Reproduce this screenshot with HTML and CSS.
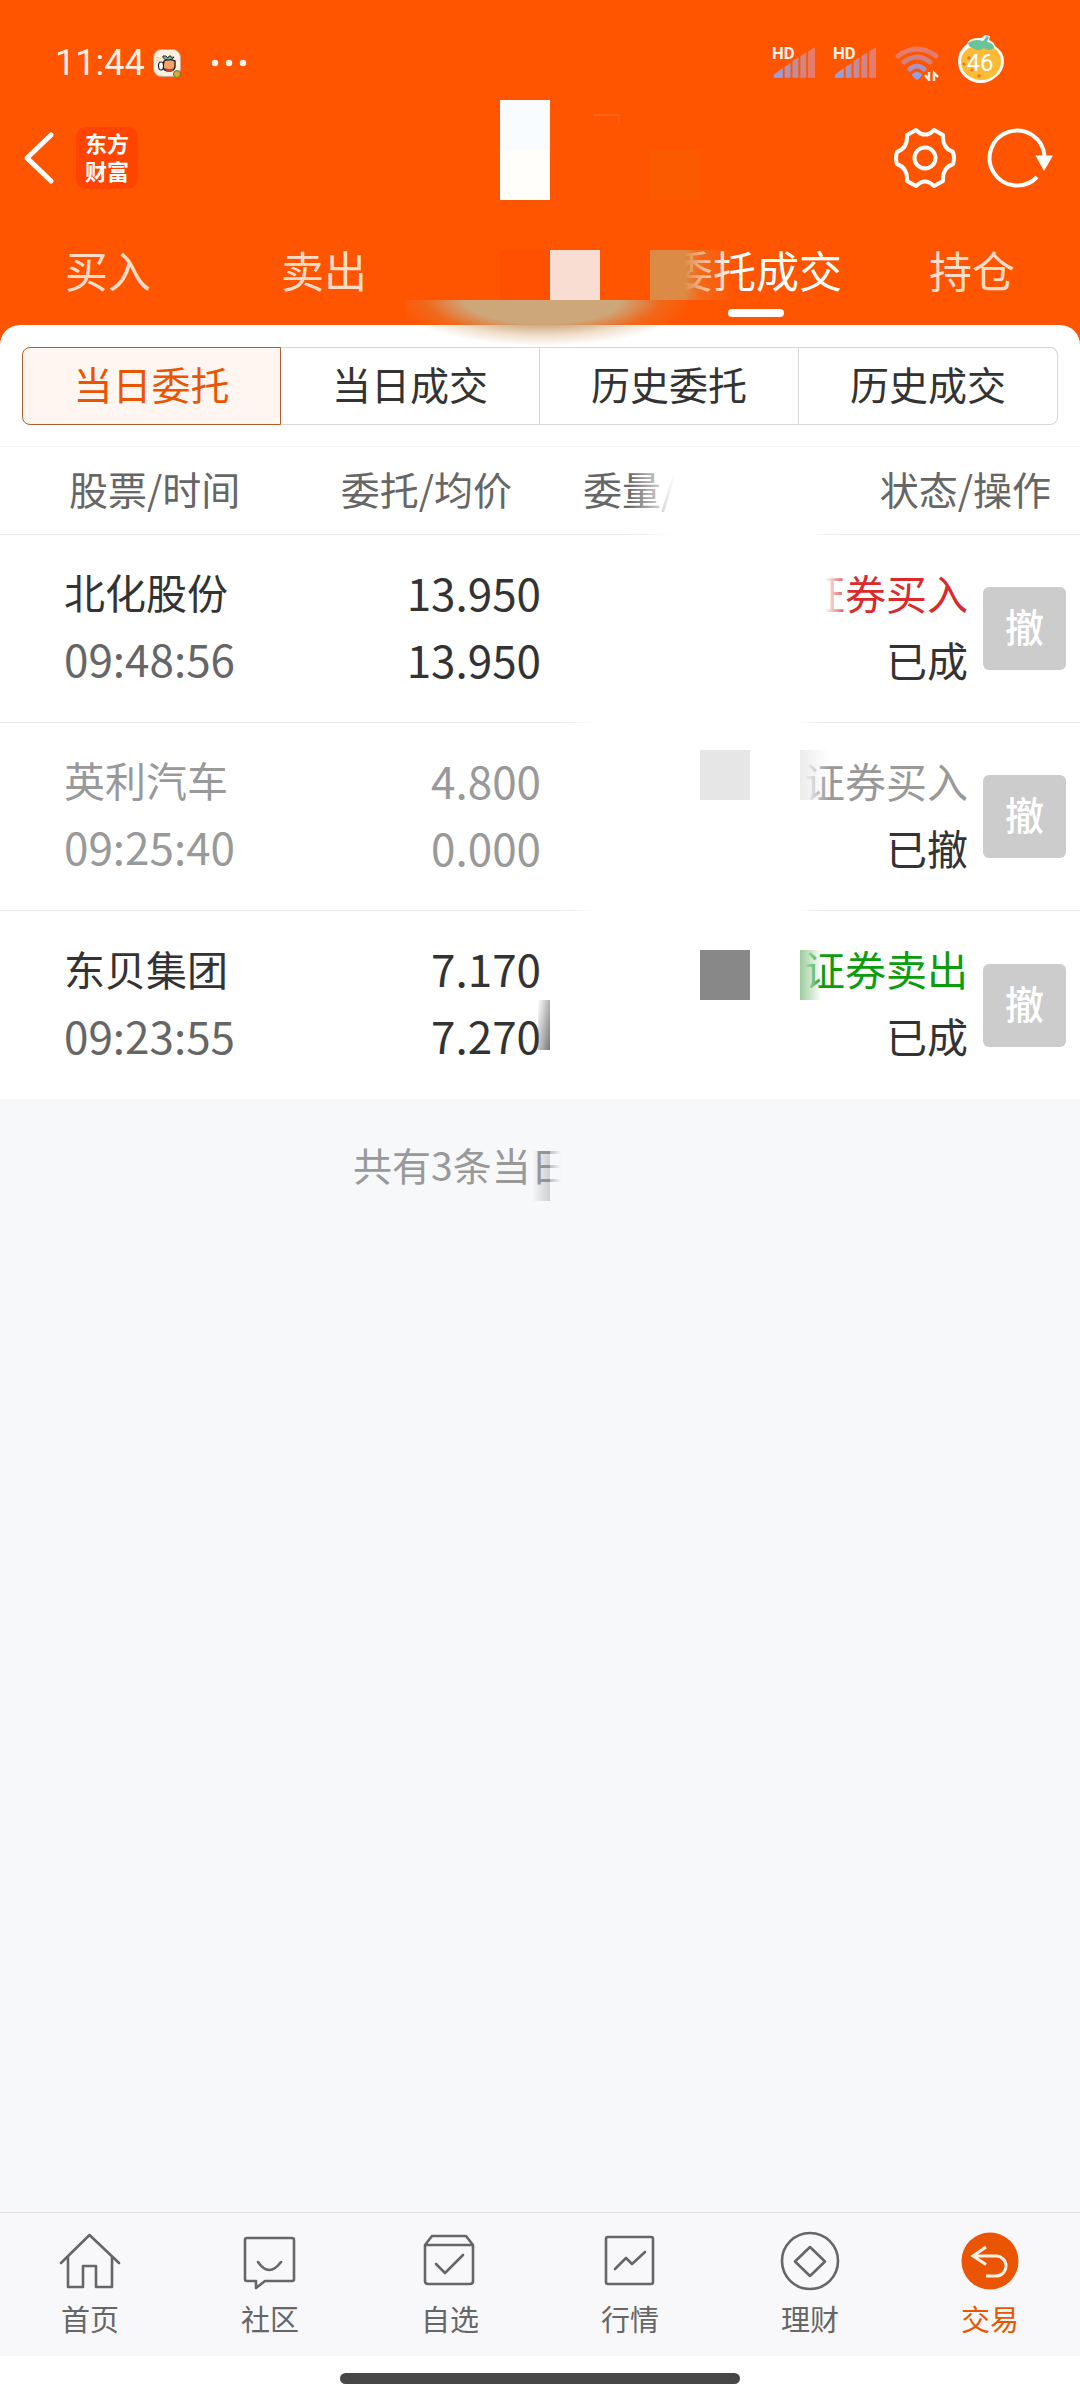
FILE: index.html
```html
<!DOCTYPE html>
<html lang="zh-CN">
<head>
    <meta charset="UTF-8">
    <meta name="viewport" content="width=device-width, initial-scale=1.0">
    <title>委托成交</title>
    <link rel="stylesheet" href="styles.css">
</head>
<body>
    <header class="header">
        <!-- Status bar -->
        <div class="status-bar">
            <span class="clock">11:44</span>
            <svg class="app-badge" viewBox="0 0 28 28">
                <rect x="0.5" y="0.5" width="27" height="27" rx="8" fill="#fdf0e0" stroke="#d9a48c"/>
                <path d="M3 9c2-2 3 2 5 0M3 12c2-1 2 1 4 0" fill="none" stroke="#eebb99"/>
                <path d="M11 12q5-3 11 0v6q-1 4-6 4t-6-4z" fill="#f6a36a" stroke="#222" stroke-width="1.4"/>
                <path d="M12 19q5 2 9 0-1 4-4.500 4t-4.500-4z" fill="#b8433a"/>
                <path d="M15 11q-6-1-5-4 3-1 5 2 1-3 3-2-1 2 3 1-1 3-6 3z" fill="#7db8a2" stroke="#222"/>
                <ellipse cx="8" cy="17" rx="2.5" ry="4" fill="#fff" stroke="#222" stroke-width="1.2"/>
                <circle cx="24" cy="25" r="3.5" fill="#e0a92e" stroke="#457a50"/>
            </svg>
            <svg class="more-dots" viewBox="0 0 36 8">
                <g fill="#fff3ea"><circle cx="4" cy="4" r="3.2"/><circle cx="18" cy="4" r="3.2"/><circle cx="32" cy="4" r="3.2"/></g>
            </svg>
            <div class="status-right">
                <svg class="signal" viewBox="0 0 44 32">
                    <defs>
                        <linearGradient id="sig" x1="0" x2="44" y1="0" y2="0" gradientUnits="userSpaceOnUse">
                            <stop offset="0" stop-color="#88a6f2"/><stop offset="0.5" stop-color="#c08c9c"/><stop offset="1" stop-color="#ee7961"/>
                        </linearGradient>
                    </defs>
                    <g fill="url(#sig)">
                        <path d="M1 31v-3l9-7v10z"/><path d="M12 31V20l6-4v15z"/><path d="M20 31V14l6-4v21z"/><path d="M28 31V9l6-4v26z"/><path d="M36 31V4l7-4v31z"/>
                    </g>
                    <text class="hd" x="-1" y="12">HD</text>
                </svg>
                <svg class="signal" viewBox="0 0 44 32">
                    <g fill="url(#sig)">
                        <path d="M1 31v-3l9-7v10z"/><path d="M12 31V20l6-4v15z"/><path d="M20 31V14l6-4v21z"/><path d="M28 31V9l6-4v26z"/><path d="M36 31V4l7-4v31z"/>
                    </g>
                    <text class="hd" x="-1" y="12">HD</text>
                </svg>
                <svg class="wifi" viewBox="0 0 44 36">
                    <g fill="none" stroke-width="5" stroke-linecap="round">
                        <path d="M3 11q19-14 38 0" stroke="#e47b6c"/>
                        <path d="M9 17q13-10 26 0" stroke="#cf8184"/>
                        <path d="M15 24q7-6 14 0" stroke="#ab92bf"/>
                    </g>
                    <path d="M17 29q5-4 10 0 0 3-5 6-5-3-5-6z" fill="#8da3ec"/>
                    <path d="M34 27v8l-4-5M39 36v-8l4 4" fill="none" stroke="#fff3ea" stroke-width="2.4"/>
                </svg>
                <svg class="battery" viewBox="0 0 48 50">
                    <path d="M10 10q2-7 14-6l4-3 5 1-1 4q5 2 6 6 9 6 9 15 0 10-8 16-7 6-15 6-9 0-16-6Q1 37 1 27q0-10 9-17z" fill="#fff"/>
                    <path d="M12 14h25q7 5 7 13 0 8-6 14-6 5-14 5-7 0-14-5-6-5-6-14 0-8 8-13z" fill="#fcbb37"/>
                    <path d="M11 9q6-5 15-2l4-5 2 1-2 5q7 1 7 6-5 4-10 0-7 4-11 0-4 0-5-5z" fill="#68c29a"/>
                    <g fill="#e97b16"><circle cx="12" cy="24" r="1.8"/><circle cx="7" cy="30" r="1.6"/><circle cx="15" cy="36" r="1.6"/><circle cx="22" cy="42" r="1.8"/></g>
                    <text class="level" x="23" y="37" text-anchor="middle">46</text>
                </svg>
            </div>
        </div>

        <!-- Title bar -->
        <div class="title-bar">
            <button class="icon-btn back" aria-label="返回">
                <svg viewBox="0 0 32 54"><path d="M28 4 4 27l24 23" fill="none" stroke="#fff" stroke-width="5" stroke-linecap="round" stroke-linejoin="round"/></svg>
            </button>
            <span class="logo"><span>东方</span><span>财富</span></span>
            <button class="icon-btn settings" aria-label="设置">
                <svg viewBox="-32 -32 64 64" fill="none" stroke="#fff" stroke-width="4" stroke-linejoin="round">
                    <path d="M-9-28Q0-19 9-28L18-23Q17-10 28-6 30 0 28 6 17 10 18 23L9 28Q0 19-9 28L-18 23Q-17 10-28 6-30 0-28-6-17-10-18-23Z"/>
                    <circle r="10.5"/>
                </svg>
            </button>
            <button class="icon-btn refresh" aria-label="刷新">
                <svg viewBox="-32 -32 72 64">
                    <path d="M20 19A27.5 27.5 0 1 1 27.5-2" fill="none" stroke="#fff" stroke-width="4"/>
                    <path d="M18.500-2.500H36L27 13z" fill="#fff"/>
                </svg>
            </button>
        </div>

        <nav class="tabs">
            <a href="#" class="tab">买入</a>
            <a href="#" class="tab">卖出</a>
            <a href="#" class="tab" aria-label="撤单"></a>
            <a href="#" class="tab active">委托成交</a>
            <a href="#" class="tab">持仓</a>
        </nav>

        <!-- Covered patches -->
        <span class="patch patch-title"></span>
        <span class="patch patch-corner"></span>
        <span class="patch patch-dim"></span>
        <span class="patch patch-red"></span>
        <span class="patch patch-pink"></span>
        <span class="patch patch-tan"></span>
        <span class="patch patch-glow"></span>
    </header>

    <main class="content">
        <section class="card">
            <div class="segments">
                <button class="segment active">当日委托</button>
                <button class="segment">当日成交</button>
                <button class="segment">历史委托</button>
                <button class="segment">历史成交</button>
            </div>

            <div class="orders">
                <table class="order-table">
                    <colgroup>
                        <col class="col-name">
                        <col class="col-price">
                        <col class="col-amount">
                        <col class="col-state">
                        <col class="col-action">
                    </colgroup>
                    <thead>
                        <tr>
                            <th class="name">股票/时间</th>
                            <th class="price">委托/均价</th>
                            <th class="amount">委量/</th>
                            <th class="state" colspan="2">状态/操作</th>
                        </tr>
                    </thead>
                    <tbody>
                        <tr>
                            <td class="name">北化股份<br><span class="num time">09:48:56</span></td>
                            <td class="price num">13.950<br>13.950</td>
                            <td></td>
                            <td class="state"><span class="buy">证券买入</span><br>已成</td>
                            <td class="action"><button class="cancel-btn">撤</button></td>
                        </tr>
                        <tr class="cancelled">
                            <td class="name">英利汽车<br><span class="num time">09:25:40</span></td>
                            <td class="price num">4.800<br>0.000</td>
                            <td></td>
                            <td class="state"><span class="void">证券买入</span><br>已撤</td>
                            <td class="action"><button class="cancel-btn">撤</button></td>
                        </tr>
                        <tr>
                            <td class="name">东贝集团<br><span class="num time">09:23:55</span></td>
                            <td class="price num">7.170<br>7.270</td>
                            <td></td>
                            <td class="state"><span class="sell">证券卖出</span><br>已成</td>
                            <td class="action"><button class="cancel-btn">撤</button></td>
                        </tr>
                    </tbody>
                </table>
                <span class="patch veil-head"></span>
                <span class="patch veil-body"></span>
                <span class="patch veil-state"></span>
                <span class="patch patch-light"></span>
                <span class="patch patch-light-edge"></span>
                <span class="patch patch-dark"></span>
                <span class="patch patch-green-edge"></span>
                <span class="patch patch-shadow"></span>
            </div>
        </section>
        <p class="summary">共有3条当日<span class="patch summary-fade"></span><span class="patch summary-shadow"></span></p>
    </main>

    <nav class="bottom-nav">
        <a href="#" class="nav-item">
            <svg viewBox="0 0 64 64"><path d="M3 33 31.500 5 61 33M10 27v30h15V36h13v21h16V27"/></svg>
            首页
        </a>
        <a href="#" class="nav-item">
            <svg viewBox="0 0 64 64"><path d="M9 8h45q2 0 2 2v39q0 2-2 2H27l-9 7v-7H9q-2 0-2-2V10q0-2 2-2zM20 32q11 16 23 0"/></svg>
            社区
        </a>
        <a href="#" class="nav-item">
            <svg viewBox="0 0 64 64"><path d="M7 15h48v36q0 3-3 3H10q-3 0-3-3zL14 6h34l7 9M18 34l9 9 18-18"/></svg>
            自选
        </a>
        <a href="#" class="nav-item">
            <svg viewBox="0 0 64 64"><rect x="8" y="7" width="47" height="47" rx="2"/><path d="m17 39 11-11 6 6 13-12"/></svg>
            行情
        </a>
        <a href="#" class="nav-item">
            <svg viewBox="0 0 64 64"><circle cx="32" cy="31" r="28"/><path d="m32 17 15 14.500L32 46 17 31.500z"/></svg>
            理财
        </a>
        <a href="#" class="nav-item active">
            <svg viewBox="0 0 64 64"><circle class="disc" cx="32" cy="31" r="28.500"/><path class="arrow" d="M28 17 15 26l13 8.500M15 26h23a10 10 0 0 1 0 20H28"/></svg>
            交易
        </a>
    </nav>
    <div class="home-indicator"></div>
</body>
</html>
```
FILE: styles.css
```css
:root {
    --orange: #ff5500;
    --accent: #ea5504;
    --text: #333;
    --muted: #666;
    --faint: #999;
    --page: #f7f8fa;
}

* {
    margin: 0;
    padding: 0;
    box-sizing: border-box;
}

body {
    font-family: 'Noto Sans CJK SC', sans-serif;
    color: var(--text);
    background: var(--page);
    min-height: 100vh;
    display: flex;
    flex-direction: column;
}

a {
    color: inherit;
    text-decoration: none;
}

button {
    font: inherit;
    color: inherit;
    background: none;
    border: 0;
}

svg {
    display: block;
}

/* Header */
.header {
    position: relative;
    background: var(--orange);
    padding-bottom: 20px;
}

.status-bar {
    display: flex;
    align-items: center;
    height: 96px;
    padding: 30px 75px 0 55px;
}

.clock {
    font-family: Roboto, sans-serif;
    font-size: 36px;
    line-height: 66px;
    color: #ffeee2;
    margin-right: 8px;
}

.app-badge {
    width: 28px;
    height: 28px;
}

.more-dots {
    width: 36px;
    height: 8px;
    margin-left: 30px;
}

.status-right {
    display: flex;
    align-items: center;
    gap: 18px;
    margin-left: auto;
}

.signal {
    width: 43px;
    height: 32px;
    overflow: visible;
}

.wifi {
    width: 44px;
    height: 36px;
}

.battery {
    width: 48px;
    height: 50px;
    margin-bottom: 8px;
}

.hd {
    font: 700 17px Roboto, sans-serif;
    fill: #fff3ea;
}

.level {
    font: 400 24px Roboto, sans-serif;
    fill: #fff;
}

.title-bar {
    display: flex;
    align-items: center;
    height: 124px;
    padding: 0 23px;
}

.back svg {
    width: 32px;
    height: 54px;
}

.logo {
    display: flex;
    flex-direction: column;
    width: 62px;
    height: 62px;
    margin-left: 21px;
    padding-top: 1px;
    border-radius: 10px;
    background: #ff4400;
    color: #fff;
    font-size: 22px;
    font-weight: 700;
    line-height: 28px;
    text-align: center;
}

.settings {
    margin-left: auto;
}

.settings svg {
    width: 64px;
    height: 64px;
}

.refresh {
    margin-left: 28px;
}

.refresh svg {
    width: 72px;
    height: 64px;
}

.tabs {
    display: grid;
    grid-template-columns: repeat(5, 1fr);
    height: 105px;
    padding-top: 19px;
}

.tab {
    display: flex;
    flex-direction: column;
    align-items: center;
    font-size: 43px;
    line-height: 60px;
    color: #ffdcc8;
    white-space: nowrap;
}

.tab.active {
    color: #fff;
}

.tab.active::after {
    content: '';
    width: 56px;
    height: 8px;
    margin-top: 10px;
    border-radius: 4px;
    background: #fff;
}

/* Patches lying over the content */
.patch {
    position: absolute;
    width: 50px;
    height: 50px;
    pointer-events: none;
}

.patch-title {
    left: 500px;
    top: 100px;
    height: 100px;
    background: linear-gradient(#f8fcff 50%, #fffefa 50%);
}

.patch-corner {
    left: 593px;
    top: 114px;
    width: 27px;
    height: 10px;
    border-top: 2px solid #ff6418;
    border-right: 2px solid #ff5f10;
}

.patch-dim {
    left: 650px;
    top: 150px;
    background: #fb5a00;
}

.patch-red {
    left: 500px;
    top: 250px;
    background: #ff5000;
}

.patch-pink {
    left: 550px;
    top: 250px;
    background: #f9ddd3;
}

.patch-tan {
    left: 650px;
    top: 250px;
    width: 85px;
    background: linear-gradient(90deg, #db8b45 40%, rgba(233, 120, 45, 0.6) 58%, rgba(255, 85, 0, 0));
}

.patch-glow {
    z-index: 2;
    left: 405px;
    top: 300px;
    width: 300px;
    background: radial-gradient(ellipse 150px 46px at 46% 0, #cda67a 52%, rgba(205, 150, 90, 0.3) 78%, rgba(205, 150, 90, 0));
}

/* Card */
.card {
    position: relative;
    margin-top: -20px;
    background: #fff;
    border-radius: 20px 20px 0 0;
}

.segments {
    display: grid;
    grid-template-columns: repeat(4, 1fr);
    padding: 22px 22px 21px;
    border-bottom: 1px solid #f5f5f5;
}

.segment {
    height: 78px;
    padding-bottom: 6px;
    font-size: 39px;
    border: 1px solid #d5d8db;
    border-left-width: 0;
}

.segment:last-child {
    border-radius: 0 8px 8px 0;
}

.segment.active {
    color: var(--accent);
    background: #fff6f2;
    border: 1px solid #b05c24;
    border-radius: 8px 0 0 8px;
}

.orders {
    position: relative;
}

.order-table {
    width: 100%;
    table-layout: fixed;
    border-spacing: 0;
}

.col-price {
    width: 260px;
}

.col-amount {
    width: 260px;
}

.col-state {
    width: 167px;
}

.col-action {
    width: 112px;
}

th {
    height: 88px;
    padding-bottom: 6px;
    font-size: 39px;
    font-weight: 400;
    color: var(--muted);
    text-align: left;
    white-space: nowrap;
    border-bottom: 1px solid #ebebeb;
}

td {
    height: 188px;
    padding-bottom: 6px;
    font-size: 41px;
    line-height: 67px;
    white-space: nowrap;
    border-bottom: 1px solid #ebebeb;
}

tbody tr:last-child td {
    border-bottom: 0;
}

th.name {
    padding-left: 69px;
}

td.name {
    padding-left: 64px;
}

th.price,
th.state {
    text-align: right;
    padding-right: 29px;
}

th.amount {
    padding-left: 42px;
}

td.price,
td.state {
    text-align: right;
}

.num {
    font-size: 44px;
}

.time {
    color: var(--muted);
}

.cancelled .name,
.cancelled .price,
.cancelled .time,
.void {
    color: var(--faint);
}

.buy {
    color: #d92b2b;
}

.sell {
    color: #0c9d0c;
}

td.action {
    padding: 0 0 0 15px;
}

.cancel-btn {
    display: block;
    width: 83px;
    height: 83px;
    padding-bottom: 6px;
    border-radius: 6px;
    background: #ccc;
    color: #fff;
    font-size: 39px;
    font-weight: 500;
}

.veil-head {
    left: 610px;
    top: 0;
    width: 230px;
    height: 89px;
    background: linear-gradient(90deg, rgba(255, 255, 255, 0) 8%, #fff 28%, #fff 85%, rgba(255, 255, 255, 0));
}

.veil-body {
    left: 560px;
    top: 89px;
    width: 260px;
    height: auto;
    bottom: 0;
    background: linear-gradient(90deg, rgba(255, 255, 255, 0), #fff 14%, #fff 92%, rgba(255, 255, 255, 0));
}

.veil-state {
    left: 800px;
    top: 100px;
    height: 90px;
    background: linear-gradient(90deg, #fff 50%, rgba(255, 255, 255, 0));
}

.patch-light {
    left: 700px;
    top: 303px;
    background: #e6e6e6;
}

.patch-light-edge {
    left: 800px;
    top: 303px;
    width: 30px;
    background: linear-gradient(90deg, #ececec, rgba(255, 255, 255, 0));
}

.patch-dark {
    left: 700px;
    top: 503px;
    background: #888;
}

.patch-green-edge {
    left: 800px;
    top: 503px;
    width: 22px;
    background: linear-gradient(90deg, #9ccc9c, rgba(255, 255, 255, 0));
}

.patch-shadow {
    left: 538px;
    top: 553px;
    width: 12px;
    background: linear-gradient(100deg, rgba(255, 255, 255, 0), #777);
}

.summary {
    position: relative;
    padding: 35px 0 0 353px;
    font-size: 39px;
    line-height: 60px;
    color: var(--faint);
}

.summary-fade {
    left: 550px;
    top: 42px;
    background: linear-gradient(90deg, rgba(247, 248, 250, 0.4), var(--page) 22%);
}

.summary-shadow {
    left: 532px;
    top: 52px;
    width: 18px;
    background: linear-gradient(90deg, rgba(130, 130, 130, 0), rgba(130, 130, 130, 0.35));
}

/* Bottom navigation */
.bottom-nav {
    display: grid;
    grid-template-columns: repeat(6, 1fr);
    height: 144px;
    margin-top: auto;
    padding-top: 17px;
    background: #f8f8fb;
    border-top: 1px solid #e2e2e4;
}

.nav-item {
    display: flex;
    flex-direction: column;
    align-items: center;
    font-size: 29px;
    line-height: 48px;
    color: var(--muted);
}

.nav-item svg {
    width: 64px;
    height: 64px;
    fill: none;
    stroke: var(--muted);
    stroke-width: 2.6;
    stroke-linecap: round;
    stroke-linejoin: round;
}

.nav-item.active {
    color: var(--accent);
}

.nav-item .disc {
    fill: var(--accent);
    stroke: none;
}

.nav-item .arrow {
    stroke: #fff0e6;
    stroke-width: 3;
    stroke-linecap: butt;
    stroke-linejoin: miter;
}

.home-indicator {
    height: 44px;
    padding-top: 17px;
    background: #fff;
}

.home-indicator::after {
    content: '';
    display: block;
    width: 37%;
    height: 11px;
    margin: 0 auto;
    border-radius: 6px;
    background: #474747;
}
```
